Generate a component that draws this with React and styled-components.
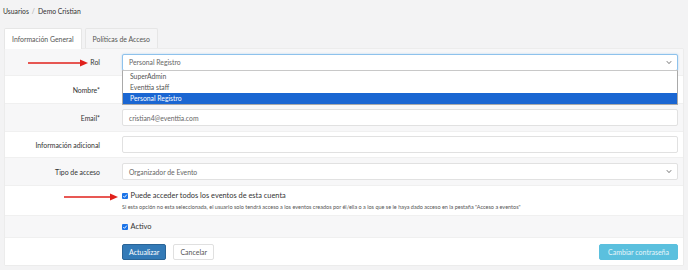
import React from "react";
import styled, { createGlobalStyle } from "styled-components";

const Global = createGlobalStyle`
  html, body { margin: 0; padding: 0; }
  body {
    background: #f3f3f4;
    font-family: Lato, "Open Sans", "Liberation Sans", sans-serif;
    color: #333;
    width: 688px;
    height: 270px;
    overflow: hidden;
  }
`;

const Page = styled.div`
  padding: 0 5px 0 4px;
`;

const Breadcrumb = styled.div`
  display: flex;
  align-items: center;
  gap: 3px;
  height: 21px;
  font-size: 6.8px;
  color: #333;
  margin-left: -1px;
`;

const Sep = styled.span`
  color: #aaa;
`;

const Tabs = styled.div`
  display: flex;
  gap: 3px;
  margin-top: 7px;
  height: 20px;
`;

const Tab = styled.div`
  display: flex;
  align-items: center;
  padding: 0 7px;
  font-size: 6.9px;
  color: #555;
  background: ${(p) => (p.$active ? "#fff" : "#f5f5f6")};
  border: 1px solid #e6e6e6;
  border-bottom: none;
  border-radius: 2px 2px 0 0;
  margin-bottom: ${(p) => (p.$active ? "-1px" : "0")};
  position: relative;
  z-index: 1;
`;

const Panel = styled.div`
  background: #fff;
  border: 1px solid #ececec;
  border-radius: 0 2px 2px 2px;
  width: 678px;
`;

const Row = styled.div`
  display: grid;
  grid-template-columns: 117px 1fr;
  align-items: center;
  height: ${(p) => p.$h}px;
  background: ${(p) => (p.$alt ? "#f7f7f8" : "#fff")};
  border-bottom: ${(p) => (p.$last ? "none" : "1px solid #f0f0f0")};
  padding-right: 5px;
  position: relative;
  z-index: ${(p) => (p.$top ? 3 : "auto")};
  box-sizing: border-box;
`;

const Label = styled.div`
  text-align: right;
  padding-right: 22px;
  font-size: 6.9px;
  font-weight: 400;
  color: #333;
`;

const Field = styled.div`
  position: relative;
`;

const Input = styled.div`
  height: 17px;
  box-sizing: border-box;
  border: 1px solid ${(p) => (p.$focus ? "#8ec2ec" : "#e1e1e1")};
  box-shadow: ${(p) => (p.$focus ? "0 0 2px rgba(102,175,233,0.5)" : "none")};
  border-radius: 2px;
  background: #fff;
  display: flex;
  align-items: center;
  justify-content: space-between;
  padding: 0 5px 0 6px;
  font-size: 6.8px;
  color: #666;
`;

const Chevron = () => (
  <svg width="6" height="5" viewBox="0 0 6 5">
    <path d="M0.8 1.2 L3 3.6 L5.2 1.2" fill="none" stroke="#666" strokeWidth="0.9" />
  </svg>
);

const Listbox = styled.ul`
  position: absolute;
  left: 0;
  right: 0;
  top: 16px;
  margin: 0;
  padding: 0;
  list-style: none;
  background: #fff;
  border: 1px solid #a9a9a9;
  border-top-color: #c8c8c8;
  z-index: 5;
  font-size: 6.8px;
`;

const Option = styled.li`
  height: 11px;
  line-height: 11px;
  padding-left: 7px;
  color: ${(p) => (p.$sel ? "#fff" : "#555")};
  background: ${(p) => (p.$sel ? "#1a66d2" : "transparent")};
`;

const Check = styled.span`
  display: inline-flex;
  align-items: center;
  justify-content: center;
  width: 6px;
  height: 6px;
  border-radius: 1px;
  background: #1a73e8;
  flex: none;
`;

const CheckLine = styled.div`
  display: flex;
  align-items: center;
  gap: 2.5px;
  font-size: 7.4px;
  color: #333;
`;

const Help = styled.div`
  font-size: 5.5px;
  color: #555;
  margin-top: 4px;
  white-space: nowrap;
`;

const Buttons = styled.div`
  display: flex;
  align-items: center;
  gap: 7px;
`;

const Btn = styled.button`
  height: 16px;
  box-sizing: border-box;
  padding: 0 ${(p) => (p.$variant === "info" ? 8 : 6)}px;
  font-family: inherit;
  font-size: 7px;
  border-radius: 2px;
  border: 1px solid ${(p) => (p.$variant === "primary" ? "#2a6496" : p.$variant === "info" ? "#5bc0de" : "#e0e0e0")};
  background: ${(p) => (p.$variant === "primary" ? "#337ab7" : p.$variant === "info" ? "#5bc0de" : "#fff")};
  color: ${(p) => (p.$variant === "default" ? "#555" : p.$variant === "info" ? "#e8f6fb" : "#fff")};
  margin-left: ${(p) => (p.$push ? "auto" : "0")};
`;

const Arrow = styled.svg`
  position: absolute;
  left: ${(p) => p.$x}px;
  top: ${(p) => p.$y}px;
`;

const CheckIcon = () => (
  <Check>
    <svg width="6" height="6" viewBox="0 0 6 6">
      <path d="M1.3 3.1 L2.5 4.3 L4.8 1.6" fill="none" stroke="#fff" strokeWidth="0.9" />
    </svg>
  </Check>
);

const RedArrow = ({ x, y, w }) => (
  <Arrow $x={x} $y={y} width={w} height="8" viewBox={`0 0 ${w} 8`}>
    <line x1="0" y1="4" x2={w - 6} y2="4" stroke="#e0201b" strokeWidth="1.3" />
    <polygon points={`${w - 8},0.5 ${w},4 ${w - 8},7.5`} fill="#e0201b" />
  </Arrow>
);

export default function App() {
  return (
    <>
      <Global />
      <Page>
        <Breadcrumb>
          <span>Usuarios</span>
          <Sep>/</Sep>
          <span>Demo Cristian</span>
        </Breadcrumb>
        <Tabs>
          <Tab $active>Información General</Tab>
          <Tab>Políticas de Acceso</Tab>
        </Tabs>
        <Panel>
          <Row $h={27} $alt $top>
            <RedArrow x={23} y={10} w={60} />
            <Label>Rol</Label>
            <Field>
              <Input $focus>
                <span>Personal Registro</span>
                <Chevron />
              </Input>
              <Listbox>
                <Option>SuperAdmin</Option>
                <Option>Eventtia staff</Option>
                <Option $sel>Personal Registro</Option>
              </Listbox>
            </Field>
          </Row>
          <Row $h={28}>
            <Label>Nombre*</Label>
            <Field>
              <Input />
            </Field>
          </Row>
          <Row $h={28} $alt>
            <Label>Email*</Label>
            <Field>
              <Input>cristian4@eventtia.com</Input>
            </Field>
          </Row>
          <Row $h={26}>
            <Label>Información adicional</Label>
            <Field>
              <Input />
            </Field>
          </Row>
          <Row $h={28} $alt>
            <Label>Tipo de acceso</Label>
            <Field>
              <Input>
                <span>Organizador de Evento</span>
                <Chevron />
              </Input>
            </Field>
          </Row>
          <Row $h={30}>
            <RedArrow x={59} y={7} w={54} />
            <div />
            <Field>
              <CheckLine>
                <CheckIcon />
                <span>Puede acceder todos los eventos de esta cuenta</span>
              </CheckLine>
              <Help>
                Si esta opción no esta seleccionada, el usuario solo tendrá acceso a los eventos creados por él/ella o a los que se le haya dado acceso en la pestaña "Acceso a eventos"
              </Help>
            </Field>
          </Row>
          <Row $h={22} $alt>
            <div />
            <CheckLine>
              <CheckIcon />
              <span>Activo</span>
            </CheckLine>
          </Row>
          <Row $h={27} $last>
            <div />
            <Buttons>
              <Btn $variant="primary">Actualizar</Btn>
              <Btn $variant="default">Cancelar</Btn>
              <Btn $variant="info" $push>Cambiar contraseña</Btn>
            </Buttons>
          </Row>
        </Panel>
      </Page>
    </>
  );
}
